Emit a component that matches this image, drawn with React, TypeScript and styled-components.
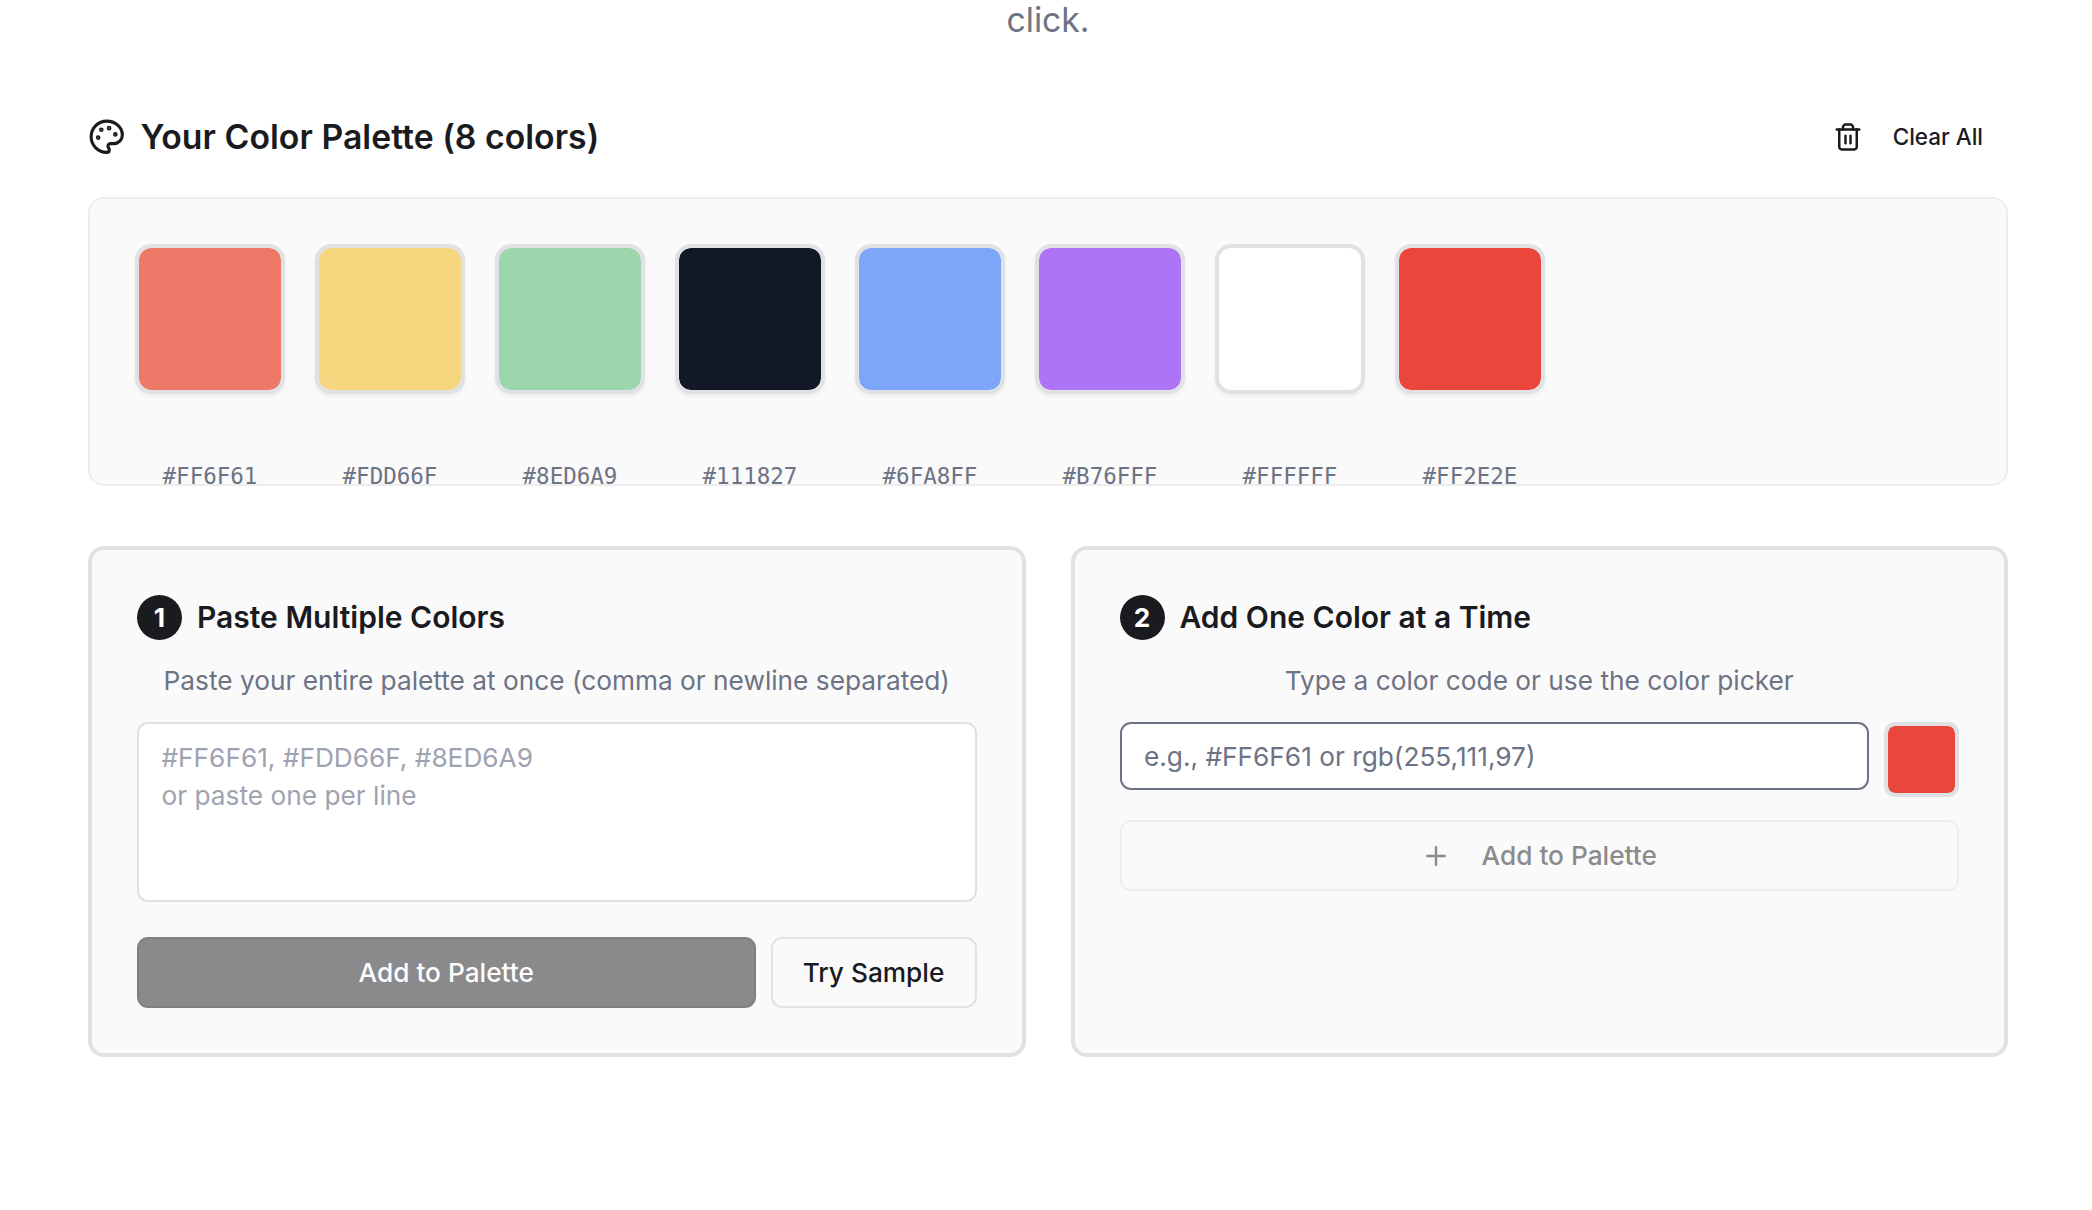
import React from "react";
import styled, { createGlobalStyle } from "styled-components";

const ink = "#1a1b1f";
const muted = "#6c7384";
const sans = `Inter, "Liberation Sans", sans-serif`;

const GlobalStyle = createGlobalStyle`
  *, *::before, *::after { box-sizing: border-box; }
  body { margin: 0; background: #fff; color: ${ink}; font-family: ${sans}; overflow: hidden; }
`;

const Page = styled.main`
  height: 1210px;
  padding: 0 84px 0 88px;
  overflow: hidden;
`;

const Intro = styled.p`
  margin: 0;
  height: 40px;
  line-height: 40px;
  font-size: 33.75px;
  text-align: center;
  color: ${muted};
`;

const Header = styled.header`
  display: flex;
  align-items: center;
  justify-content: space-between;
  height: 60px;
  margin: 67px 0 30px;
`;

const Heading = styled.h2`
  display: flex;
  align-items: center;
  gap: 15px;
  margin: 0;
  font-size: 33.75px;
  line-height: 43px;
  letter-spacing: 0.03px;
  font-weight: 600;
`;

const HeadingText = styled.span`
  padding-bottom: 2px;
`;

const ClearButton = styled.button`
  display: flex;
  align-items: center;
  gap: 30px;
  height: 60px;
  padding: 0 25px 1px;
  border: 0;
  background: transparent;
  color: ${ink};
  font: 500 22.5px ${sans};
`;

const Icon = styled.svg<{ $size: number }>`
  width: ${(p) => p.$size}px;
  height: ${(p) => p.$size}px;
  flex: none;
  fill: none;
  stroke: currentColor;
  stroke-width: 2;
  stroke-linecap: round;
  stroke-linejoin: round;
`;

const PalettePanel = styled.section`
  display: flex;
  gap: 30px;
  height: 289px;
  padding: 45px;
  border: 2px solid #ededee;
  border-radius: 16px;
  background: #fafafa;
`;

const SwatchItem = styled.div`
  display: flex;
  flex-direction: column;
  align-items: center;
  gap: 67px;
  width: 150px;
`;

const Swatch = styled.div<{ $color: string }>`
  flex: none;
  width: 150px;
  height: 150px;
  border: 4px solid #e0e1e5;
  border-radius: 16px;
  background: ${(p) => p.$color};
  background-clip: padding-box;
  box-shadow: 0 2px 4px rgba(0, 0, 0, 0.06);
`;

const SwatchLabel = styled.span`
  font: 22.5px/30px "DejaVu Sans Mono", monospace;
  color: ${muted};
`;

const Cards = styled.div`
  display: grid;
  grid-template-columns: 1fr 1fr;
  gap: 45px;
  margin-top: 60px;
`;

const Card = styled.section`
  height: 511px;
  padding: 45px;
  border: 4px solid #e0e1e5;
  border-radius: 16px;
  background: #fafafa;
`;

const CardTitle = styled.h3`
  display: flex;
  align-items: center;
  gap: 15px;
  margin: 0;
  height: 45px;
  font-size: 30px;
  font-weight: 600;
`;

const CardTitleText = styled.span`
  padding-bottom: 2px;
`;

const Badge = styled.span`
  display: grid;
  place-items: center;
  width: 45px;
  height: 45px;
  border-radius: 50%;
  background: ${ink};
  color: #fff;
  font-size: 26.25px;
  font-weight: 700;
`;

const Hint = styled.p`
  margin: 22px 0;
  height: 38px;
  line-height: 38px;
  font-size: 26.25px;
  text-align: center;
  color: ${muted};
`;

const PasteArea = styled.textarea`
  display: block;
  width: 100%;
  height: 180px;
  padding: 15px 22.5px;
  border: 2px solid #e0e1e5;
  border-radius: 11px;
  background: #fff;
  resize: none;
  font: 26.25px/38px ${sans};
  &::placeholder { color: #9da3af; opacity: 1; }
`;

const Row = styled.div<{ $top?: number }>`
  display: flex;
  gap: 15px;
  margin-top: ${(p) => p.$top ?? 0}px;
`;

const ColorInput = styled.input`
  flex: 1;
  min-width: 0;
  height: 68px;
  padding: 0 22.5px;
  border: 2px solid ${muted};
  border-radius: 11px;
  background: #fff;
  font: 26.25px ${sans};
  &::placeholder { color: ${muted}; opacity: 1; }
`;

const Picker = styled.button`
  width: 75px;
  height: 75px;
  padding: 0;
  border: 4px solid #e0e1e5;
  border-radius: 11px;
  background: #ea463b;
  background-clip: padding-box;
`;

const Button = styled.button<{ $kind: "solid" | "outline" | "faded" }>`
  display: flex;
  align-items: center;
  justify-content: center;
  gap: 31px;
  height: 71px;
  padding: 0 30px;
  border: 2px solid;
  border-radius: 11px;
  font: 500 26.25px ${sans};
  ${(p) =>
    ({
      solid: "flex: 1; background: #8a8a8c; border-color: #808081; color: #fdfdfd;",
      outline: `width: 206px; padding: 0; background: #fafafa; border-color: #e2e2e4; color: ${ink};`,
      faded: "width: 100%; margin-top: 23px; padding-right: 31px; background: #fafafa; border-color: #eeeeee; color: #8b8b8c;",
    })[p.$kind]}
`;

const swatches = [
  { label: "#FF6F61", color: "#ed7968" },
  { label: "#FDD66F", color: "#f6d77f" },
  { label: "#8ED6A9", color: "#9dd5ad" },
  { label: "#111827", color: "#121826" },
  { label: "#6FA8FF", color: "#7da6f9" },
  { label: "#B76FFF", color: "#ad74f8" },
  { label: "#FFFFFF", color: "#ffffff" },
  { label: "#FF2E2E", color: "#ea463b" },
];

const PaletteIcon = () => (
  <Icon $size={37.5} viewBox="0 0 24 24">
    <circle cx="13.5" cy="6.5" r=".5" fill="currentColor" />
    <circle cx="17.5" cy="10.5" r=".5" fill="currentColor" />
    <circle cx="8.5" cy="7.5" r=".5" fill="currentColor" />
    <circle cx="6.5" cy="12.5" r=".5" fill="currentColor" />
    <path d="M12 2C6.5 2 2 6.5 2 12s4.5 10 10 10c.926 0 1.648-.746 1.648-1.688 0-.437-.18-.835-.437-1.125-.29-.289-.438-.652-.438-1.125a1.64 1.64 0 0 1 1.668-1.668h1.996c3.051 0 5.555-2.503 5.555-5.554C21.965 6.012 17.461 2 12 2z" />
  </Icon>
);

const TrashIcon = () => (
  <Icon $size={30} viewBox="0 0 24 24">
    <path d="M3 6h18" />
    <path d="M19 6v14c0 1-1 2-2 2H7c-1 0-2-1-2-2V6" />
    <path d="M8 6V4c0-1 1-2 2-2h4c1 0 2 1 2 2v2" />
    <path d="M10 11v6M14 11v6" />
  </Icon>
);

const PlusIcon = () => (
  <Icon $size={30} viewBox="0 0 24 24">
    <path d="M5 12h14M12 5v14" />
  </Icon>
);

export default function App() {
  return (
    <>
      <GlobalStyle />
      <Page>
        <Intro>click.</Intro>
        <Header>
          <Heading>
            <PaletteIcon />
            <HeadingText>Your Color Palette (8 colors)</HeadingText>
          </Heading>
          <ClearButton>
            <TrashIcon />
            Clear All
          </ClearButton>
        </Header>
        <PalettePanel>
          {swatches.map((s) => (
            <SwatchItem key={s.label}>
              <Swatch $color={s.color} />
              <SwatchLabel>{s.label}</SwatchLabel>
            </SwatchItem>
          ))}
        </PalettePanel>
        <Cards>
          <Card>
            <CardTitle>
              <Badge>1</Badge>
              <CardTitleText>Paste Multiple Colors</CardTitleText>
            </CardTitle>
            <Hint>Paste your entire palette at once (comma or newline separated)</Hint>
            <PasteArea placeholder={"#FF6F61, #FDD66F, #8ED6A9\nor paste one per line"} />
            <Row $top={35}>
              <Button $kind="solid">Add to Palette</Button>
              <Button $kind="outline">Try Sample</Button>
            </Row>
          </Card>
          <Card>
            <CardTitle>
              <Badge>2</Badge>
              <CardTitleText>Add One Color at a Time</CardTitleText>
            </CardTitle>
            <Hint>Type a color code or use the color picker</Hint>
            <Row>
              <ColorInput placeholder="e.g., #FF6F61 or rgb(255,111,97)" />
              <Picker aria-label="Pick a color" />
            </Row>
            <Button $kind="faded">
              <PlusIcon />
              Add to Palette
            </Button>
          </Card>
        </Cards>
      </Page>
    </>
  );
}
